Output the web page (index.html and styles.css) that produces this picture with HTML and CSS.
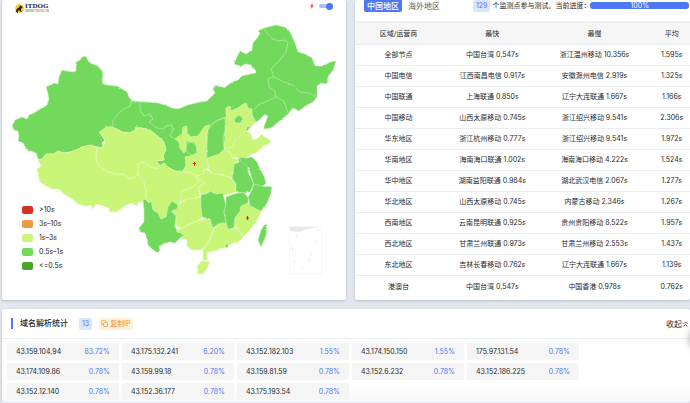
FILE: index.html
```html
<!DOCTYPE html>
<html lang="zh-CN">
<head>
<meta charset="utf-8">
<meta name="viewport" content="width=device-width, initial-scale=1">
<title>ITDOG</title>
<link rel="stylesheet" href="styles.css">
</head>
<body>
<main class="page">
  <div class="top">
    <section class="card map-card">
      <header class="map-head">
        <div class="logo">
          <svg class="logo-mark" viewBox="0 0 20 20" aria-hidden="true"><circle cx="10" cy="10" r="9.5" fill="#f6c51c"/><path d="M12 2l1 3 4 1-1 3-3 1v3l2 5h-2l-3-4-4 1 1 5H5l-1-3-3 2 2-5 1-3 5-3z" fill="#1d1a12"/></svg>
          <div class="logo-text"><span class="logo-name">ITDOG</span><span class="logo-sub">WWW.ITDOG.CN</span></div>
        </div>
        <label class="switch">
          <svg class="bolt" viewBox="0 0 8 12" aria-hidden="true"><path d="M5 0L0 7h3L2 12l6-7H5z" fill="#e8503c"/></svg>
          <input type="checkbox" role="switch" aria-label="fast" checked>
        </label>
      </header>
      <svg class="map" viewBox="2 20 344 280" aria-hidden="true">
        <defs>
          <filter id="coast" x="-5%" y="-5%" width="110%" height="110%">
            <feTurbulence type="fractalNoise" baseFrequency="0.22" numOctaves="2" seed="4" result="n"/>
            <feDisplacementMap in="SourceGraphic" in2="n" scale="2" xChannelSelector="R" yChannelSelector="G"/>
          </filter>
        </defs>
        <g filter="url(#coast)" stroke="#c3f1b4" stroke-width=".6" stroke-linejoin="round">
          <g class="mid">
            <path d="M132 101L145 102 158 103 165 105 172 108 178 109 188 105 200 102 207 101 215 93 213 89 215 85 224 88 232 82 238 80 242 76 250 74 256 73 256 71 251 65 246 64 240 66 234 64 237 57 240 51 246 54 252 50 253 43 258 37 260 33 258 31 264 28 268 27 276 25 284 27 288 29 291 34 295 43 298 52 305 54 312 58 315 66 322 66 327 64 330 62 336 61 333 70 328 77 327 84 321 83 317 86 317 97 313 102 307 105 303 108 299 111 293 108 288 114 282 119 276 124 271 128 264 129 264 127 266 121 268 116 264 115 258 121 255 122 230 150 200 165 186 166 182 172 175 171 168 167 164 163 160 166 156 161 164 160 163 155 166 150 164 142 160 138 155 134 150 130 142 128 136 127 135 130 130 133 122 132 117 129 112 127 100 120z"/>
            <path d="M84 56.5L86 56.5 88 61 92 64 98 66 102 71 103 76 102 80 103 84 110 85.500 117 86 122 89 127 92 129 97 132 101 130 106 124 109 118 114 113 120 112 127 106 128 103 131 99 132 102 136 105 140 102 143 103 148 97 147 90 145 82 147 76 150 70 152 64 153 58 151 54 154 46 154 42 160 38 159 36 153 31 151 26 149 23 143 18 141 19 136 18 131 14 130 12 126 15 120 22 117 27 119 29 115 34 113 40 109 47 105 49 99 47 90 46 87 54 83 58 84 59 77 62 70 66 71 73 72 76 71 76 62 80 60 82 57z"/>
          </g>
          <g class="slow">
            <path d="M42 159L46 154 54 154 58 151 64 153 70 152 76 150 82 147 90 145 97 147 96 155 97 163 101 168 108 172 117 174 124 174 129 179 135 177 138 174 141 175 144 182 146 190 146 200 143 203 138 202 137 206 132 203 126 205 121 209 116 212 110 212 109 208 103 206 96 204 93 209 91 205 85 206 78 204 74 200 69 197 64 194 59 189 52 189 46 186 40 182 38 175 37 169 41 166 38 160z"/>
            <path d="M97 147L103 148 105 140 100 132 106 127 112 127 117 129 122 132 130 133 135 130 136 127 142 128 150 130 155 134 160 138 164 142 166 150 163 155 164 160 156 161 160 166 157 169 150 167 145 163 141 162 138 165 138 174 135 177 129 179 124 174 117 174 108 172 101 168 97 163 96 155z"/>
            <path d="M138 174L138 165 141 162 145 163 150 167 157 169 160 166 164 163 168 167 175 171 182 172 190 172 196 176 199 181 193 187 187 189 181 192 181 200 178 205 171 202 168 207 166 217 161 219 158 213 153 210 151 203 146 200 146 190 144 182z"/>
            <path d="M196 176L202 175 205 183 198 188 200 196 195 198 190 201 187 199 181 202 181 192 187 189 193 187 199 181z"/>
            <path d="M178 205L187 199 195 198 201 197 202 217 198 221 190 224 181 229 176 225 176 216 171 211 177 209z"/>
            <path d="M181 229L190 224 198 221 206 218 212 222 214 229 210 239 206 246 201 250 192 250 187 246 187 240 178 236 176 229z"/>
            <path d="M214 229L218 224 226 223 229 229 238 229 243 237 240 241 233 243 226 247 218 250 210 252 207 253 207 260 203 261 203 250 206 246 210 239z"/>
            <path d="M196 176L202 175 205 169 212 173 222 175 231 177 235 184 236 192 226 195 216 194 210 191 201 195 198 188 205 183z"/>
            <path d="M206 159L213 156 224 150 230 152 232 157 239 160 234 164 234 170 232 173 233 178 222 175 212 173 207 167z"/>
            <path d="M198 136L205 126 210 125 207 133 207 145 206 158 209 167 204 170 202 175 196 176 190 172 182 172 186 166 185 157 195 155 197 148 195 142 186 141 186 150 184 153 180 148 179 142 175 139 182 134 183 127 187 126 187 134 191 137z"/>
            <path d="M226 118L226 108 230 106 231 111 238 108 242 105 246 103 248 108 252 110 252 115 255 120 255 123 251 127 247 126 246 131 240 136 235 139 233 147 224 149 224 141 225 130z"/>
            <path d="M224 149L233 147 235 140 240 136 246 131 251 134 253 140 258 138 262 134 264 137 271 141 269 144 263 146 256 153 252 154 245 158 238 158 232 157 230 152z"/>
            <path d="M248 203L256 209 261 211 260 215 256 222 250 230 243 237 238 229 235 226 235 218 240 211 241 206z"/>
            <path d="M197 266L202 261 210 262 207 268 203 274 198 274z"/>
          </g>
          <g class="mid">
            <path d="M143 201L145 199 149 203 151 201 153 210 158 213 161 219 166 217 168 207 172 201 178 205 177 209 171 211 176 216 175 225 177 232 184 235 180 238 175 243 170 242 163 244 159 246 160 252 156 252 152 249 148 245 147 238 145 233 140 232 139 228 144 222 144 210z"/>
            <path d="M201 195L208 193 210 191 216 194 223 193 224 198 226 205 224 212 226 222 218 224 213 228 210 219 202 217 201 207z"/>
            <path d="M226 197L234 194 243 192 248 197 248 203 241 206 240 211 235 218 234 228 228 229 226 222 224 212 226 204z"/>
            <path d="M238 158L243 160 248 165 248 172 251 178 254 184 250 192 246 193 236 192 236 184 232 178 233 173 234 164 239 162z"/>
            <path d="M239 157L246 158 252 157 257 162 260 169 264 176 266 183 262 187 254 184 251 176 249 168 241 161z"/>
            <path d="M254 184L262 186 272 187 270 196 267 203 261 211 256 209 250 205 248 197 252 190z"/>
            <path d="M208 130L215 122 225 118 225 130 223 140 224 149 219 154 207 158 207 145z"/>
            <path d="M234 120L238 115 242 117 243 120 240 123 236 123zM187 143L191 142 196 145 197 152 192 155 187 152 186 148zM225 245L228 244 228 247 226 248z"/>
            <path d="M267 225L265 224 261 230 258 240 261 247 266 236z"/>
          </g>
          <path fill="none" d="M140 101L140 110 144 116 150 114 153 119 149 122 157 128 164 129 166 126 172 125 173 130 170 136 175 139M210 125L217 120 226 117M264 29L267 33 271 38 278 41 284 40 288 42 286 52 279 61 271 69 274 76 268 79 269 87 275 91 276 97M274 77L284 82 293 85 300 92 309 93 316 96M276 97L265 102 258 105 254 110M276 97L284 101 288 113M242 124L246 126 244 130"/>
        </g>
        <path d="M194.500 162v4M193 163.500h3M247.500 216v4M246 218h3" stroke="#e02b18"/>
        <rect x="289.500" y="226.500" width="32" height="47" fill="none" stroke="#f7f7f7"/>
        <path d="M290 227h28l-10 2-9 3-9-1z" fill="#e9e9e9"/>
        <path d="M317 228l1 4M296 235l1 3M315 239l1 4M312 252l-2 4M292 247l1 3M294 260l1 3M301 268h2M308 262l2-3" fill="none" stroke="#ececec"/>
      </svg>
      <ul class="legend">
        <li><i class="swatch s-red"></i>&gt;10s</li>
        <li><i class="swatch s-orange"></i>3s–10s</li>
        <li><i class="swatch s-lime"></i>1s–3s</li>
        <li><i class="swatch s-green"></i>0.5s–1s</li>
        <li><i class="swatch s-dark"></i>&lt;=0.5s</li>
      </ul>
    </section>

    <section class="card table-card">
      <header class="tabs">
        <button class="tab active" type="button">中国地区</button>
        <button class="tab" type="button">海外地区</button>
        <span class="badge">129</span>
        <span class="status">个监测点参与测试。当前进度：</span>
        <div class="progress">100%</div>
      </header>
      <table class="results">
        <thead><tr><th>区域/运营商</th><th>最快</th><th>最慢</th><th>平均</th></tr></thead>
        <tbody>
          <tr><td>全部节点</td><td>中国台湾 0.547s</td><td>浙江温州移动 10.356s</td><td>1.595s</td></tr>
          <tr><td>中国电信</td><td>江西南昌电信 0.917s</td><td>安徽滁州电信 2.919s</td><td>1.325s</td></tr>
          <tr><td>中国联通</td><td>上海联通 0.850s</td><td>辽宁大连联通 1.667s</td><td>1.166s</td></tr>
          <tr><td>中国移动</td><td>山西太原移动 0.745s</td><td>浙江绍兴移动 9.541s</td><td>2.306s</td></tr>
          <tr><td>华东地区</td><td>浙江杭州移动 0.777s</td><td>浙江绍兴移动 9.541s</td><td>1.972s</td></tr>
          <tr><td>华南地区</td><td>海南海口联通 1.002s</td><td>海南海口移动 4.222s</td><td>1.524s</td></tr>
          <tr><td>华中地区</td><td>湖南益阳联通 0.984s</td><td>湖北武汉电信 2.067s</td><td>1.277s</td></tr>
          <tr><td>华北地区</td><td>山西太原移动 0.745s</td><td>内蒙古移动 2.346s</td><td>1.267s</td></tr>
          <tr><td>西南地区</td><td>云南昆明联通 0.925s</td><td>贵州贵阳移动 8.522s</td><td>1.957s</td></tr>
          <tr><td>西北地区</td><td>甘肃兰州联通 0.973s</td><td>甘肃兰州移动 2.553s</td><td>1.437s</td></tr>
          <tr><td>东北地区</td><td>吉林长春移动 0.762s</td><td>辽宁大连联通 1.667s</td><td>1.139s</td></tr>
          <tr><td>港澳台</td><td>中国台湾 0.547s</td><td>中国香港 0.978s</td><td>0.762s</td></tr>
        </tbody>
      </table>
    </section>
  </div>

  <section class="card dns-card">
    <header class="dns-head">
      <h2>域名解析统计</h2>
      <span class="badge">13</span>
      <button class="copy" type="button"><svg viewBox="0 0 14 14" aria-hidden="true"><path d="M4 9H2.500A1.500 1.500 0 0 1 1 7.500v-5A1.500 1.500 0 0 1 2.500 1h5A1.500 1.500 0 0 1 9 2.500V4M6.500 5h5A1.500 1.500 0 0 1 13 6.500v5a1.500 1.500 0 0 1-1.500 1.500h-5A1.500 1.500 0 0 1 5 11.500v-5A1.500 1.500 0 0 1 6.500 5z" fill="none" stroke="currentColor" stroke-width="1.300"/></svg>复制IP</button>
      <button class="fold" type="button">收起<svg viewBox="0 0 10 12" aria-hidden="true"><path d="M1 6l4-4 4 4M1 11l4-4 4 4" fill="none" stroke="currentColor" stroke-width="1.500"/></svg></button>
    </header>
    <ul class="ips">
      <li><span>43.159.104.94</span><b>83.72%</b></li>
      <li><span>43.175.132.241</span><b>6.20%</b></li>
      <li><span>43.152.182.103</span><b>1.55%</b></li>
      <li><span>43.174.150.150</span><b>1.55%</b></li>
      <li><span>175.97.131.54</span><b>0.78%</b></li>
      <li><span>43.174.109.86</span><b>0.78%</b></li>
      <li><span>43.159.99.18</span><b>0.78%</b></li>
      <li><span>43.159.81.59</span><b>0.78%</b></li>
      <li><span>43.152.6.232</span><b>0.78%</b></li>
      <li><span>43.152.186.225</span><b>0.78%</b></li>
      <li><span>43.152.12.140</span><b>0.78%</b></li>
      <li><span>43.152.36.177</span><b>0.78%</b></li>
      <li><span>43.175.193.54</span><b>0.78%</b></li>
    </ul>
    <div class="edge-shadow"></div>
  </section>
</main>
</body>
</html>
```

FILE: styles.css
```css
* { box-sizing: border-box; }
body {
  margin: 0;
  background: #e4e8ee;
  color: #26282c;
  font: 7px/8px Inter, "Noto Sans CJK SC", sans-serif;
  overflow-x: hidden;
}
button {
  margin: 0;
  padding: 0;
  border: 0;
  background: none;
  color: inherit;
  font: inherit;
}
ul { margin: 0; padding: 0; list-style: none; }
.page { padding-left: 2px; }
.top {
  display: grid;
  grid-template-columns: 344fr 335fr;
  gap: 9px;
  margin-bottom: 9px;
}
.card {
  position: relative;
  background: #fff;
  border-radius: 2px;
  box-shadow: 0 1px 3px #b4bac4;
}

.map-head {
  display: flex;
  justify-content: space-between;
  height: 20px;
  padding: 2px 13px 0 13px;
}
.logo { display: flex; gap: 1px; height: 12px; align-items: center; }
.logo-mark { width: 9px; height: 9px; }
.logo-text { display: flex; flex-direction: column; }
.logo-name { font: bold 7px/7px "Liberation Serif", serif; color: #222; }
.logo-sub { font: 3px/3px "Liberation Sans", sans-serif; color: #555; }
.switch { display: flex; align-items: center; gap: 5px; height: 8px; }
.bolt { width: 4px; height: 6px; }
.switch input {
  appearance: none;
  display: flex;
  justify-content: flex-end;
  align-items: center;
  width: 14px;
  height: 4px;
  margin: 0;
  border-radius: 2px;
  background: #a9bffa;
}
.switch input::before {
  content: "";
  width: 7px;
  height: 7px;
  border-radius: 50%;
  background: #4d78f2;
}
.map { display: block; width: 100%; height: auto; }
.mid { fill: #73d95b; }
.slow { fill: #c9f578; stroke: #e6fac0; }
.legend {
  position: absolute;
  left: 20px;
  bottom: 30px;
  display: grid;
  gap: 5px;
}
.legend li { display: flex; align-items: center; gap: 6px; height: 9px; }
.swatch { width: 11px; height: 8px; border-radius: 2px; }
.s-red { background: #d93025; }
.s-orange { background: #e99d42; }
.s-lime { background: #c9f578; }
.s-green { background: #73d95b; }
.s-dark { background: #48a52d; }

.tabs {
  display: flex;
  align-items: center;
  height: 23px;
  padding: 0 1px 10px 9px;
  border-bottom: 2px solid #f0f1f3;
}
.tab {
  height: 13px;
  padding: 0 3px;
  border-radius: 2px;
  margin-right: 3px;
  font-size: 8px;
  color: #606266;
  white-space: nowrap;
}
.tab.active { background: #4d78f2; color: #fff; font-weight: 500; }
.badge {
  padding: 2px 3px;
  border-radius: 2px;
  background: #dde5fd;
  color: #4d78f2;
}
.tabs .badge { margin: 0 2px 0 27px; }
.status { white-space: nowrap; }
.progress {
  flex: 1;
  height: 7px;
  border-radius: 3px;
  background: #4d78f2;
  color: #fff;
  line-height: 7px;
  text-align: center;
}
.results {
  width: 100%;
  margin-bottom: 3px;
  border-collapse: separate;
  border-spacing: 0;
  table-layout: fixed;
  text-align: center;
}
.results th, .results td {
  height: 21px;
  padding: 0;
  border-bottom: 1px solid #ebeef0;
  white-space: nowrap;
}
.results th { height: 22px; background: #f6f6f6; font-weight: 400; }
.results th:nth-child(1) { width: 26%; }
.results th:nth-child(2) { width: 30%; }
.results th:nth-child(3) { width: 31%; }
.results th:last-child, .results td:last-child { padding-left: 7px; }
.results tr:last-child td { border-bottom: 0; }

.dns-card {
  overflow: hidden;
  min-height: 93px;
  background: linear-gradient(#fff 80%, #f8f8f8);
}
.dns-head {
  display: flex;
  align-items: center;
  height: 30px;
  padding: 0 2px 0 9px;
  border-bottom: 1px solid #ebeef0;
}
.dns-head h2 {
  margin: 0 11px 0 0;
  padding-left: 7px;
  border-left: 2px solid #4d78f2;
  font-size: 8px;
  line-height: 11px;
  font-weight: 500;
}
.copy {
  display: flex;
  align-items: center;
  gap: 2px;
  height: 12px;
  margin-left: 7px;
  padding: 0 2px;
  border-radius: 2px;
  background: #fdf0dc;
  color: #ef8f1e;
}
.copy svg { width: 7px; height: 7px; }
.fold {
  display: flex;
  align-items: center;
  gap: 1px;
  margin-left: auto;
  font-size: 8px;
}
.fold svg { width: 5px; height: 6px; }
.ips {
  display: grid;
  grid-template-columns: repeat(auto-fill, 112px);
  gap: 3px;
  padding: 4px 0 2px 5px;
}
.ips li {
  display: flex;
  align-items: center;
  justify-content: space-between;
  height: 17px;
  padding: 0 9px;
  border-radius: 1px;
  background: #f5f5f5;
}
.ips b { font-weight: 400; color: #4d78f2; }
.edge-shadow {
  position: absolute;
  top: 20px;
  right: -20px;
  width: 20px;
  height: 20px;
  border-radius: 50%;
  box-shadow: 0 0 8px #999;
}
```
